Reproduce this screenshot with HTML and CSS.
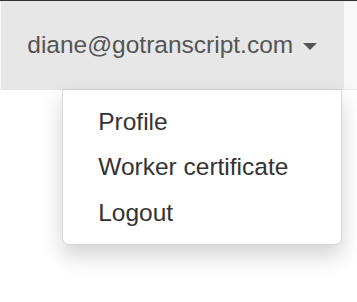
FILE: index.html
```html
<!DOCTYPE html>
<html>
<head>
<meta charset="utf-8">
<link rel="stylesheet" href="styles.css">
</head>
<body>
<nav class="navbar">
  <ul class="nav">
    <li class="dropdown">
      <a class="toggle" href="#">diane@gotranscript.com <span class="caret"></span></a>
      <ul class="menu">
        <li><a href="#">Profile</a></li>
        <li><a href="#">Worker certificate</a></li>
        <li><a href="#">Logout</a></li>
      </ul>
    </li>
  </ul>
</nav>
</body>
</html>
```
FILE: styles.css
```css
html, body {
  margin: 0;
  padding: 0;
  background: #fff;
}
body {
  min-height: 302px;
  font-family: "Liberation Sans", Arial, sans-serif;
  font-size: 24.5px;
  line-height: 35px;
  color: #333;
}
.navbar {
  position: relative;
  z-index: 1;
  border-top: 1.5px solid #333;
  background: #f8f8f8;
  border-bottom: 1px solid #e7e7e7;
}
.nav {
  display: flex;
  list-style: none;
  margin: 0;
  padding: 0 0 0 1px;
}
.dropdown {
  position: relative;
}
.toggle {
  display: block;
  padding: 26.25px;
  background: #e7e7e7;
  color: #555;
  text-decoration: none;
  white-space: nowrap;
}
.caret {
  display: inline-block;
  width: 0;
  height: 0;
  margin-left: 3.5px;
  vertical-align: middle;
  border-top: 7px solid #555;
  border-left: 7px solid transparent;
  border-right: 7px solid transparent;
}
.menu {
  position: absolute;
  top: 100%;
  right: 1.5px;
  z-index: 10;
  min-width: 280px;
  margin: 0;
  padding: 8.75px 0;
  list-style: none;
  background: #fff;
  border: 1.5px solid rgba(0, 0, 0, 0.15);
  border-top-color: rgba(0, 0, 0, 0.2);
  border-radius: 0 0 7px 7px;
  box-shadow: 0 10.5px 21px rgba(0, 0, 0, 0.175);
  box-sizing: border-box;
}
.menu a {
  display: block;
  padding: 5.25px 35px;
  color: #333;
  text-decoration: none;
  white-space: nowrap;
}
```
